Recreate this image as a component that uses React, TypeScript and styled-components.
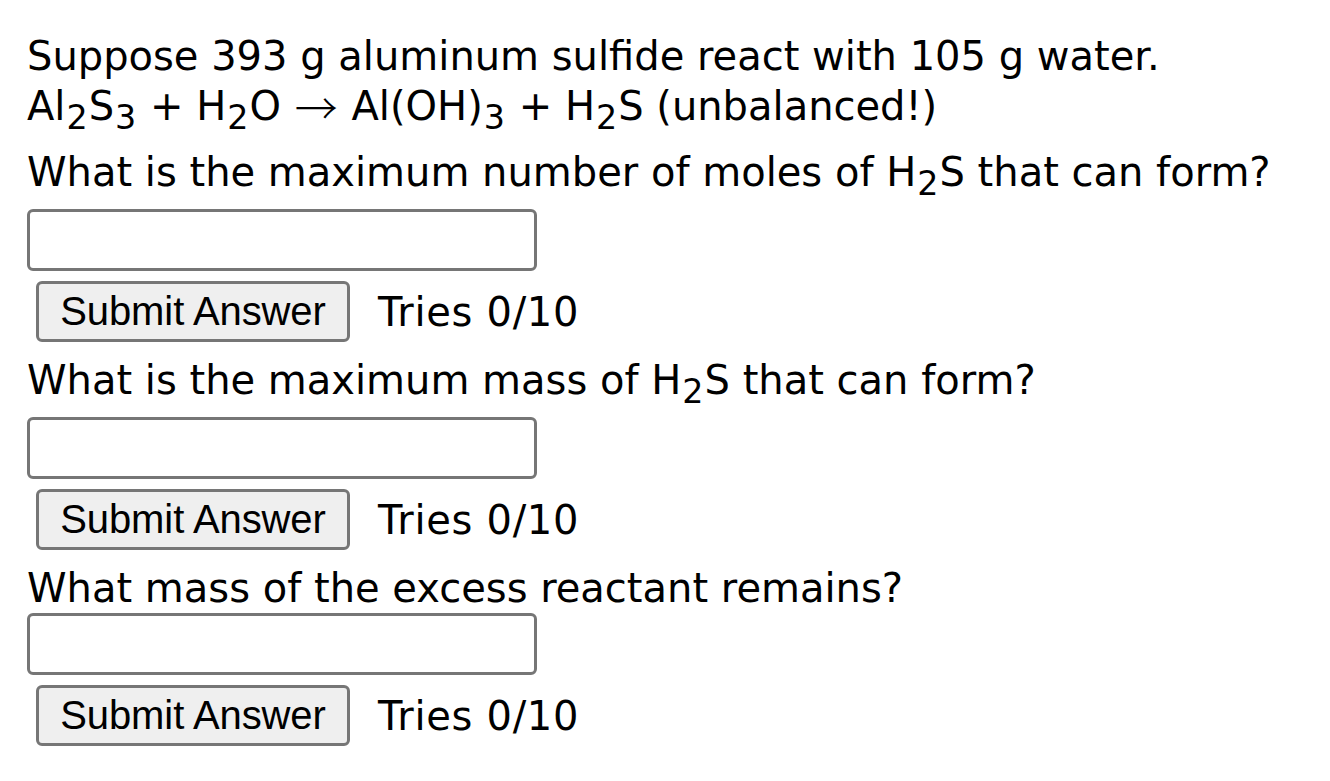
import React from 'react';
import styled, { createGlobalStyle } from 'styled-components';

const GlobalStyle = createGlobalStyle`
    html, body {
        margin: 0;
        padding: 0;
        background: #fff;
    }
    body {
        font-family: "DejaVu Sans", Verdana, sans-serif;
        color: #000;
    }
    sub {
        padding: 0 1px;
    }
`;

const Page = styled.div`
    padding: 31px 27px 0 27px;
    font-size: 40px;
    line-height: 50px;
`;

const Intro = styled.div`
    margin-bottom: 4px;
`;

const Line = styled.div`
    white-space: nowrap;
`;

const Arrow = styled.span`
    font-family: "Noto Sans CJK SC", sans-serif;
    font-weight: 300;
    font-size: 43px;
    line-height: 0;
    vertical-align: -5px;
    padding: 0 1px;
`;

const Question = styled.div`
    display: flex;
    flex-direction: column;
    align-items: flex-start;
    margin-bottom: 13px;
`;

const AnswerInput = styled.input`
    box-sizing: border-box;
    width: 510px;
    height: 62px;
    border: 3px solid #767676;
    border-radius: 6px;
    background: #fff;
    padding: 0 6px;
    font-size: 40px;
    font-family: "DejaVu Sans", Verdana, sans-serif;
    outline: none;
`;

const ButtonRow = styled.div`
    display: flex;
    align-items: center;
    margin-top: 10px;
    padding-left: 9px;
`;

const SubmitButton = styled.button`
    box-sizing: border-box;
    width: 314px;
    height: 61px;
    padding: 0;
    border: 3px solid #767676;
    border-radius: 6px;
    background: #efefef;
    color: #000;
    font-family: "Liberation Sans", Arial, sans-serif;
    font-size: 40px;
    letter-spacing: -0.1px;
    cursor: pointer;
`;

const Tries = styled.span`
    margin-left: 28px;
    font-size: 40px;
    letter-spacing: 0.7px;
`;

const questions: React.ReactNode[] = [
    <>What is the maximum number of moles of H<sub>2</sub>S that can form?</>,
    <>What is the maximum mass of H<sub>2</sub>S that can form?</>,
    <>What mass of the excess reactant remains?</>,
];

const App = () => {
    return (
        <>
            <GlobalStyle />
            <Page>
                <Intro>
                    <Line>Suppose 393 g aluminum sulfide react with 105 g water.</Line>
                    <Line>
                        Al<sub>2</sub>S<sub>3</sub> + H<sub>2</sub>O <Arrow>→</Arrow> Al(OH)<sub>3</sub> + H<sub>2</sub>S (unbalanced!)
                    </Line>
                </Intro>
                {questions.map((q, i) => (
                    <Question key={i}>
                        <Line>{q}</Line>
                        <AnswerInput type="text" />
                        <ButtonRow>
                            <SubmitButton type="button">Submit Answer</SubmitButton>
                            <Tries>Tries 0/10</Tries>
                        </ButtonRow>
                    </Question>
                ))}
            </Page>
        </>
    );
};

export default App;
